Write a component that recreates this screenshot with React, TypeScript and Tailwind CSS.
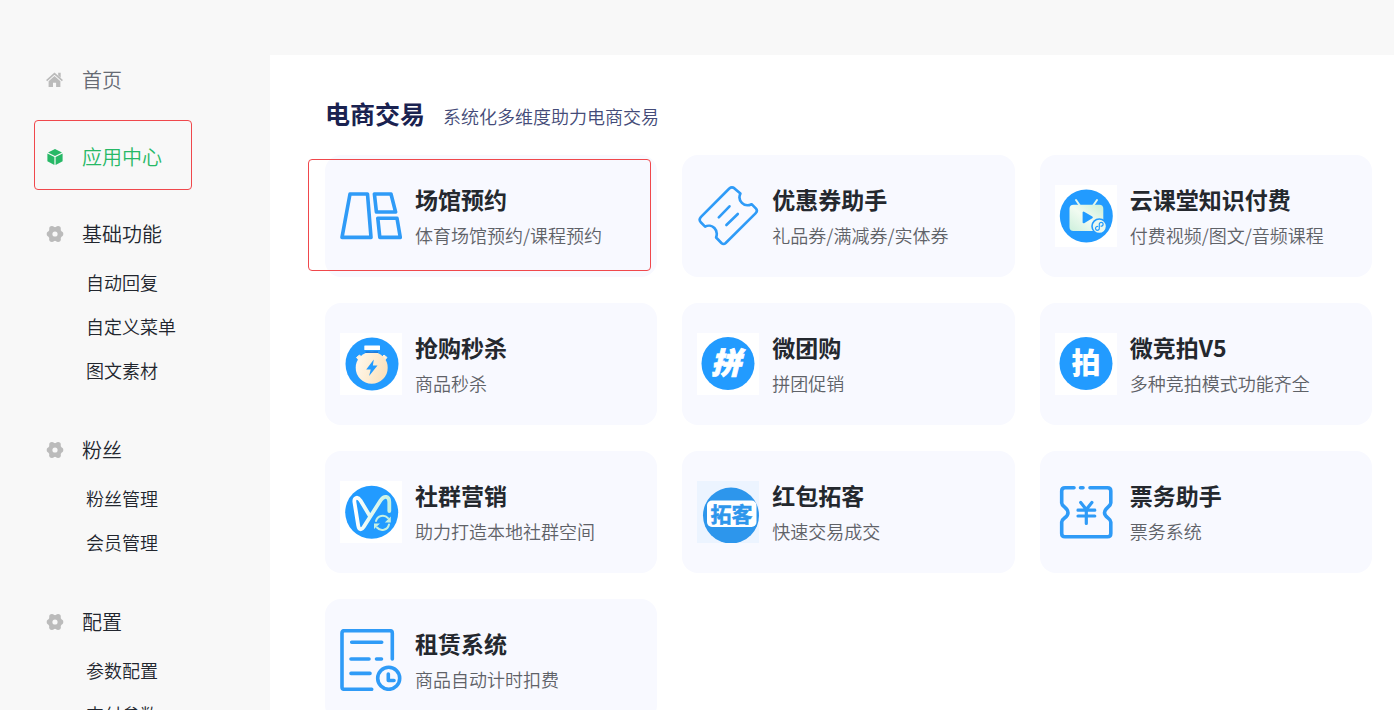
import React from 'react';

interface MenuGroup {
  id: number;
  label: string;
  children: string[];
}

interface AppItem {
  id: number;
  title: string;
  desc: string;
  icon: React.FC;
  boxClasses: string;
  highlighted?: boolean;
}

const groups: MenuGroup[] = [
  { id: 1, label: '基础功能', children: ['自动回复', '自定义菜单', '图文素材'] },
  { id: 2, label: '粉丝', children: ['粉丝管理', '会员管理'] },
  { id: 3, label: '配置', children: ['参数配置', '支付参数'] },
];

const BLUE = '#2f9bf7';
const SOLID = '#229bff';

const HomeIcon: React.FC = () => (
  <svg className="w-[18px] h-[18px]" viewBox="0 0 18 18" aria-hidden="true">
    <path d="M0.600 9.700 8.500 2.600l7.900 7.100" fill="none" stroke="#bbbbbb" strokeWidth="1.700" />
    <path fill="#bbbbbb" d="M12.200 1.700h2.500v5l-2.500-2.200ZM8.500 4.900l5.900 5.300v5.900h-4.300v-4.300H7v4.300H2.600v-5.900Z" />
  </svg>
);

const CubeIcon: React.FC = () => (
  <svg className="w-[18px] h-[18px]" viewBox="0 0 18 18" aria-hidden="true">
    <path fill="#27b866" d="M9 1 16 4.4 9 8 2 4.4ZM1.4 5.5 8.4 9v7.9L1.4 13.3ZM16.6 5.5 9.6 9v7.9l7-3.6Z" />
  </svg>
);

const GearIcon: React.FC = () => (
  <svg className="w-[18px] h-[18px]" viewBox="0 0 18 18" aria-hidden="true">
    <g fill="#bbbbbb">
      <circle cx="5.900" cy="3.800" r="2.700" />
      <circle cx="12.100" cy="3.800" r="2.700" />
      <circle cx="3.500" cy="9" r="2.800" />
      <circle cx="14.500" cy="9" r="2.800" />
      <circle cx="5.900" cy="14.200" r="2.700" />
      <circle cx="12.100" cy="14.200" r="2.700" />
      <circle cx="9" cy="9" r="7" />
    </g>
    <circle cx="9" cy="9" r="2.600" fill="#f8f8f8" />
  </svg>
);

const VenueIcon: React.FC = () => (
  <svg className="w-full h-full" viewBox="0 0 62 62" fill="none" stroke={BLUE} strokeWidth="3.600" strokeLinejoin="round">
    <path d="M10 9h17.5L31 52.4H2ZM34.4 9H51l4.6 18H36.4ZM37.8 33.3H57l3.3 19.1H39.8Z" />
  </svg>
);

const CouponIcon: React.FC = () => (
  <svg className="w-full h-full" viewBox="0 0 62 62" fill="none" stroke={BLUE} strokeWidth="2.600" strokeLinecap="round" strokeLinejoin="round">
    <path d="M32.3 3.5 4 31.9q-2.7 3 0 5.6l4.1 4.1c3-1.6 7-1 9.300 1.400s2.900 6.100 1.700 9.500l5.300 5.500q2.100 2 4.300 0L58.500 28.300q2.600-2.500.3-4.900l-4.200-4.200c-3.400 1.600-7.300 1.100-9.700-1.400s-3.100-6-1.500-9.200L37.500 3.400q-2.600-2-5.200.1Z" />
    <path d="M32.5 21.3 21.8 32.3M40.800 29 29.400 40" />
  </svg>
);

const CourseIcon: React.FC = () => (
  <svg className="w-full h-full" viewBox="0 0 62 62">
    <defs>
      <linearGradient id="tv" x1="1" y1="0" x2="0" y2="1">
        <stop offset="0" stopColor="#c9efd8" />
        <stop offset="0.5" stopColor="#f1fbf1" />
        <stop offset="1" stopColor="#cdf0dc" />
      </linearGradient>
    </defs>
    <circle cx="31.300" cy="31" r="26.500" fill={SOLID} />
    <path d="m21 15 3.800 5.500M42 15l-3.800 5.500" stroke="#e4f7ec" strokeWidth="2" strokeLinecap="round" />
    <rect x="14.500" y="19.700" width="33.800" height="26.300" rx="4" fill="url(#tv)" />
    <path d="M28.600 27.500v9.800l8.200-4.900Z" fill={SOLID} stroke={SOLID} strokeWidth="2" strokeLinejoin="round" />
    <circle cx="44.300" cy="41.300" r="7.300" fill="#e9f8ef" stroke={SOLID} strokeWidth="1.600" />
    <path d="M42.700 41.500a1.900 1.900 0 1 0 1.600 1.900v-4.200a1.900 1.900 0 1 1 1.700 1.900" fill="none" stroke={SOLID} strokeWidth="1.200" strokeLinecap="round" />
  </svg>
);

const FlashSaleIcon: React.FC = () => (
  <svg className="w-full h-full" viewBox="0 0 62 62">
    <defs>
      <linearGradient id="watch" x1="0" y1="0" x2="1" y2="0.300">
        <stop offset="0" stopColor="#fffaf0" />
        <stop offset="1" stopColor="#fbe3bf" />
      </linearGradient>
    </defs>
    <circle cx="32" cy="31" r="26.500" fill={SOLID} />
    <path d="m16.500 24.500 3-2.500 4 4-3 3ZM47 24.500 44 22l-4 4 3 3Z" fill="#fdf1dd" stroke="#fdf1dd" strokeLinejoin="round" />
    <rect x="24.300" y="12.500" width="15.700" height="4.500" rx="0.500" fill="#fff" />
    <circle cx="31.700" cy="34.800" r="16" fill="url(#watch)" />
    <path d="M25.500 19.200h12.500" stroke="#1774d8" strokeWidth="1.500" />
    <path d="m33.800 26.500-7.600 10h4.500l-1.600 6.500 8.400-10.500h-4.600Z" fill={SOLID} />
  </svg>
);

const GroupBuyIcon: React.FC = () => (
  <svg className="w-full h-full" viewBox="0 0 62 62">
    <circle cx="31" cy="30.500" r="26.500" fill={SOLID} />
    <text x="29" y="41" textAnchor="middle" fill="#fff" stroke="#fff" strokeWidth="0.800" fontSize="30" className="font-black italic">拼</text>
  </svg>
);

const AuctionIcon: React.FC = () => (
  <svg className="w-full h-full" viewBox="0 0 62 62">
    <circle cx="31" cy="30.500" r="26.500" fill={SOLID} />
    <text x="31" y="41" textAnchor="middle" fill="#fff" fontSize="29" className="font-black">拍</text>
  </svg>
);

const CommunityIcon: React.FC = () => (
  <svg className="w-full h-full" viewBox="0 0 62 62" fill="none" strokeLinecap="round">
    <defs>
      <linearGradient id="loop" x1="0" y1="0" x2="1" y2="0">
        <stop offset="0" stopColor="#ffffff" />
        <stop offset="1" stopColor="#c6f1e2" />
      </linearGradient>
    </defs>
    <circle cx="31.700" cy="31.300" r="26.500" fill={SOLID} />
    <path d="M29.500 34.500 20.500 19.500c-3-4.500-6.800-3-6 2l3.700 23c.8 4.500 3.300 5 5.600 1.300L40.500 19.500c3.800-5.500 8.800-4.500 8.800 1.500v9" stroke="url(#loop)" strokeWidth="3.800" strokeLinejoin="round" />
    <path d="M36 40a6.900 6.900 0 0 1 12-2.800M49 43.500a6.900 6.900 0 0 1-12 3" stroke="#c6f1e2" strokeWidth="2" />
    <path d="M50.800 35.500v6h-6ZM34 42.500h6l-6 5.500Z" fill="#c6f1e2" />
  </svg>
);

const RedPacketIcon: React.FC = () => (
  <svg className="w-full h-full" viewBox="0 0 62 62">
    <circle cx="34" cy="34.500" r="28" fill="#2d96ec" />
    <rect x="10" y="19.500" width="49.500" height="26.500" rx="5" fill="#fff" />
    <text x="34.500" y="40.500" textAnchor="middle" fill="#2d96ec" stroke="#2d96ec" strokeWidth="0.500" fontSize="21" className="font-bold">拓客</text>
  </svg>
);

const TicketIcon: React.FC = () => (
  <svg className="w-full h-full" viewBox="0 0 62 62" fill="none" stroke={BLUE} strokeWidth="3.600" strokeLinecap="round" strokeLinejoin="round">
    <path d="M19 6.700H10q-3.300 0-3.300 3.300v12c0 3.500 6.300 4.500 6.300 9.700S6.700 37 6.700 41v11.500q0 3.300 3.300 3.300h42.500q3.300 0 3.300-3.300V41c0-4-6.300-4.500-6.300-9.300s6.300-6.200 6.300-9.700V10q0-3.300-3.300-3.300H35M25.500 6.700h2.500" />
    <path d="m25.700 21.500 5.600 7 5.600-7M31.300 28.500v14M23 29.200h16.800M23 35h16.800" strokeWidth="3.200" />
  </svg>
);

const RentalIcon: React.FC = () => (
  <svg className="w-full h-full" viewBox="0 0 62 62" fill="none" stroke={BLUE} strokeWidth="3.600" strokeLinecap="round" strokeLinejoin="round">
    <path d="M52.300 30V4q0-2.300-2.300-2.300H4.300Q2 1.700 2 4v54q0 2.300 2.300 2.300H31.700" />
    <path d="M11.700 13.200h30M11 30h18M36.500 30h5M11 44.400h19" />
    <circle cx="48.700" cy="49.300" r="11" />
    <path d="M48.300 45v6.500H54" />
  </svg>
);

const apps: AppItem[] = [
  { id: 1, title: '场馆预约', desc: '体育场馆预约/课程预约', icon: VenueIcon, boxClasses: '', highlighted: true },
  { id: 2, title: '优惠券助手', desc: '礼品券/满减券/实体券', icon: CouponIcon, boxClasses: '' },
  { id: 3, title: '云课堂知识付费', desc: '付费视频/图文/音频课程', icon: CourseIcon, boxClasses: 'bg-white' },
  { id: 4, title: '抢购秒杀', desc: '商品秒杀', icon: FlashSaleIcon, boxClasses: 'bg-white' },
  { id: 5, title: '微团购', desc: '拼团促销', icon: GroupBuyIcon, boxClasses: 'bg-white' },
  { id: 6, title: '微竞拍V5', desc: '多种竞拍模式功能齐全', icon: AuctionIcon, boxClasses: 'bg-white' },
  { id: 7, title: '社群营销', desc: '助力打造本地社群空间', icon: CommunityIcon, boxClasses: 'bg-white' },
  { id: 8, title: '红包拓客', desc: '快速交易成交', icon: RedPacketIcon, boxClasses: 'bg-[#ecf4ff]' },
  { id: 9, title: '票务助手', desc: '票务系统', icon: TicketIcon, boxClasses: '' },
  { id: 10, title: '租赁系统', desc: '商品自动计时扣费', icon: RentalIcon, boxClasses: '' },
];

const Sidebar: React.FC = () => (
  <nav className="w-[270px] shrink-0 pl-[46px]">
    <a href="#home" className="flex items-center h-[52px] text-xl text-[#666a73]">
      <span className="w-9 shrink-0"><HomeIcon /></span>
      首页
    </a>
    <a href="#apps" className="relative flex items-center h-[52px] mt-[25px] text-xl text-[#27b866]">
      <span className="absolute -left-3 -top-[11px] w-[158px] h-[70px] border border-[#f0484c] rounded-sm" />
      <span className="w-9 shrink-0"><CubeIcon /></span>
      应用中心
    </a>
    <div className="flex flex-col gap-8 mt-[25px]">
      {groups.map((group) => (
        <div key={group.id}>
          <h3 className="flex items-center h-[52px] text-xl text-[#22262e]">
            <span className="w-9 shrink-0"><GearIcon /></span>
            {group.label}
          </h3>
          <ul className="pl-10">
            {group.children.map((child) => (
              <li key={child}>
                <a href="#menu" className="block text-lg leading-[44px] text-[#22262e]">{child}</a>
              </li>
            ))}
          </ul>
        </div>
      ))}
    </div>
  </nav>
);

const AppCard: React.FC<{ item: AppItem }> = ({ item }) => (
  <a href="#app" className="relative flex items-center gap-[13px] h-[122px] pl-[15px] rounded-2xl bg-[#f8f9ff]">
    <span className={`w-[62px] h-[62px] shrink-0 ${item.boxClasses}`}>
      <item.icon />
    </span>
    <div className="pt-0.5">
      <h3 className="text-[23px] leading-9 font-bold text-[#24282e]">{item.title}</h3>
      <p className="text-lg leading-9 text-[#5f6268]">{item.desc}</p>
    </div>
    {item.highlighted && (
      <span className="absolute -left-[17px] right-1.5 top-1 bottom-1.5 border border-[#f0484c] rounded-sm" />
    )}
  </a>
);

export default function App() {
  return (
    <div className="flex h-screen overflow-hidden bg-[#f8f8f8] pt-[54px] font-['Noto_Sans_CJK_SC',sans-serif] font-[350]">
      <Sidebar />
      <main className="flex-1 mt-px bg-white pl-[55px] pr-[22px]">
        <header className="flex items-baseline gap-[18px] h-[100px] pt-10">
          <h2 className="text-[25px] leading-9 font-bold text-[#1a2250]">电商交易</h2>
          <p className="text-lg leading-9 text-[#444b78]">系统化多维度助力电商交易</p>
        </header>
        <div className="grid grid-cols-3 gap-x-[25px] gap-y-[26px]">
          {apps.map((item) => (
            <AppCard key={item.id} item={item} />
          ))}
        </div>
      </main>
    </div>
  );
}
